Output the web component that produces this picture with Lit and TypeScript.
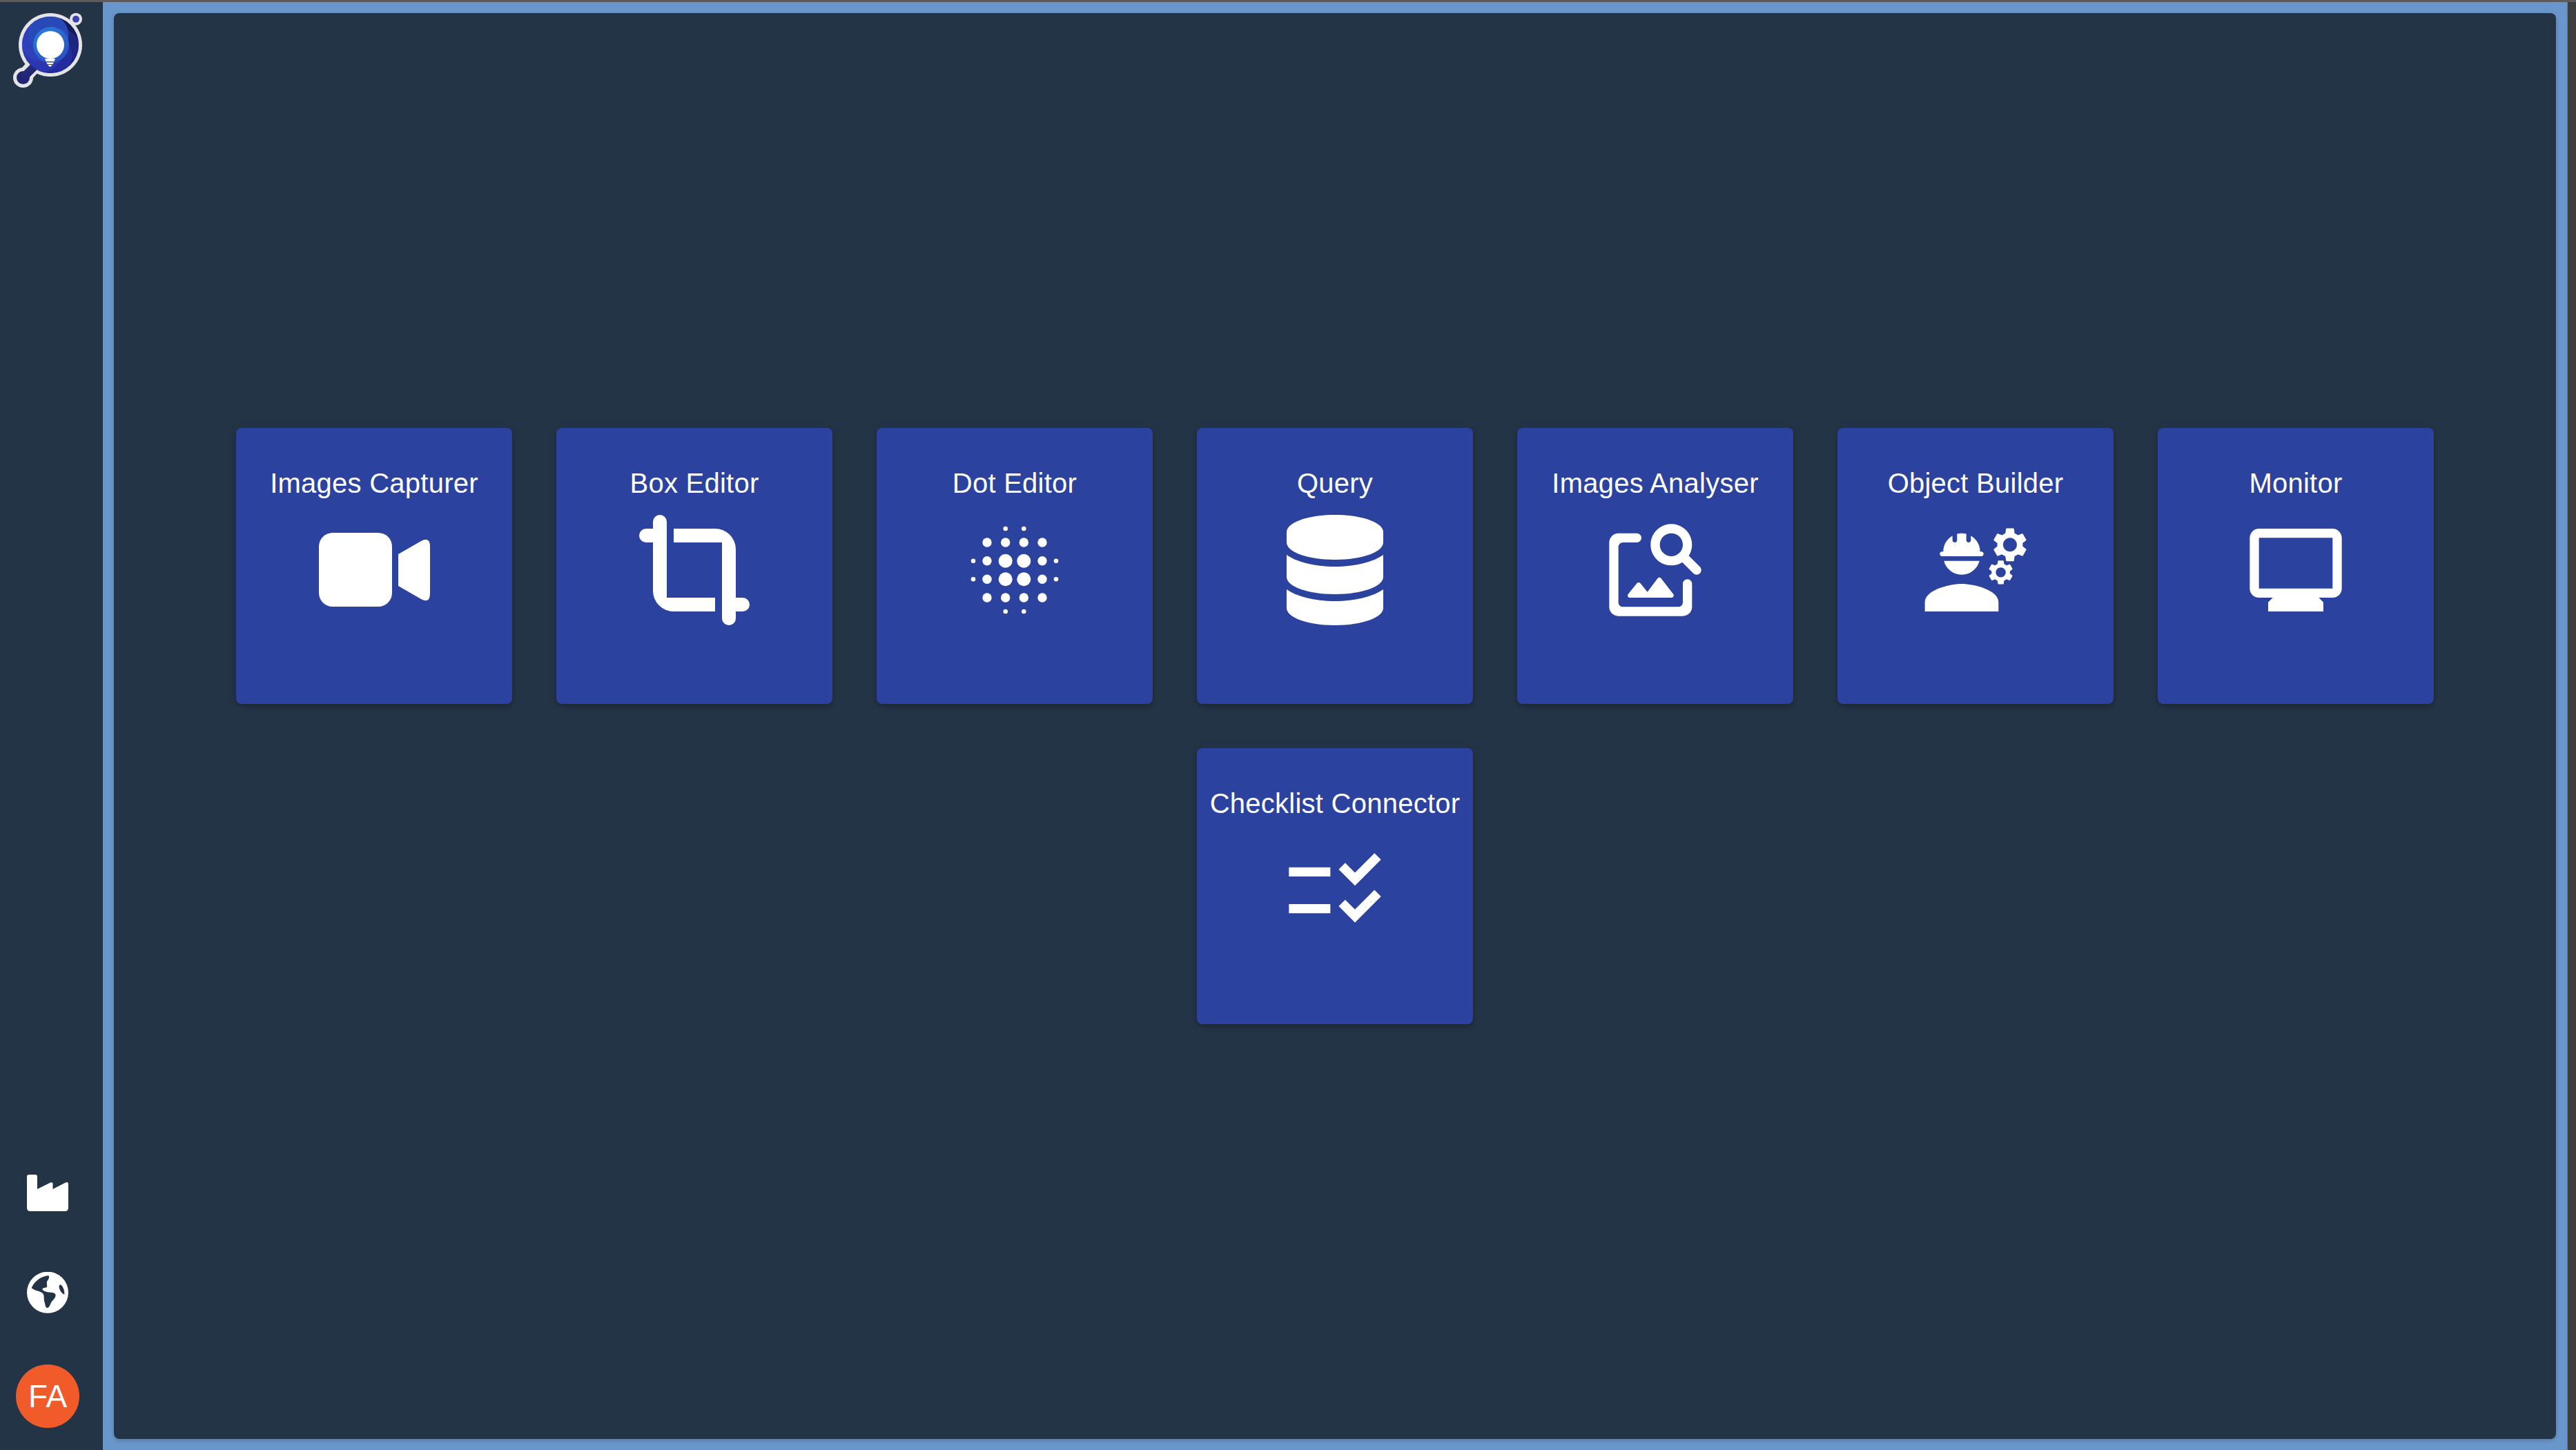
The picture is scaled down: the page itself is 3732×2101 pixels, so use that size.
import { LitElement, css, html, svg } from 'lit';
import { customElement } from 'lit/decorators.js';

const GEAR =
  'M22.1 6.84c.01-.11.02-.22.02-.34 0-.12-.01-.23-.03-.34l.74-.58c.07-.05.08-.15.04-.22l-.7-1.21c-.04-.08-.14-.1-.21-.08l-.86.35c-.23-.17-.47-.32-.74-.42l-.13-.93c-.02-.08-.09-.14-.17-.14h-1.4c-.08 0-.16.06-.17.14L18.36 4c-.26.11-.51.25-.74.42l-.87-.35c-.08-.03-.17 0-.21.08l-.7 1.21c-.04.08-.03.17.04.22l.74.58c-.02.11-.03.23-.03.34 0 .11.01.23.03.34l-.74.58c-.07.05-.08.15-.04.22l.7 1.21c.04.08.14.1.21.08l.87-.35c.23.17.47.32.74.42l.13.93c.01.08.08.14.17.14h1.4c.08 0 .16-.06.17-.14l.13-.93c.26-.11.51-.25.74-.42l.87.35c.08.03.17 0 .21-.08l.7-1.21c.04-.08.03-.17-.04-.22l-.73-.58zM19.36 8c-.83 0-1.5-.67-1.5-1.5s.67-1.5 1.5-1.5 1.5.67 1.5 1.5-.67 1.5-1.5 1.5z';

const BLUR_AXIS = [20, 40, 66.7, 93.3, 120, 140];
const BLUR_RADIUS = [
  [0, 0, 3.3, 3.3, 0, 0],
  [0, 6.7, 6.7, 6.7, 6.7, 0],
  [3.3, 6.7, 10, 10, 6.7, 3.3],
  [3.3, 6.7, 10, 10, 6.7, 3.3],
  [0, 6.7, 6.7, 6.7, 6.7, 0],
  [0, 0, 3.3, 3.3, 0, 0],
];

const APPS = [
  {
    name: 'Images Capturer',
    icon: svg`<svg class="icon" viewBox="0 0 160 160">
      <rect x="0" y="26" width="106" height="107" rx="20" />
      <path d="M115 57L148 38Q161 31 161 46V114Q161 129 148 122L115 103Z" />
    </svg>`,
  },
  {
    name: 'Box Editor',
    icon: svg`<svg class="icon" viewBox="0 0 16 16">
      <path d="M4 1A1 1 0 0 0 2 1V2H1A1 1 0 0 0 1 4H2V11A3 3 0 0 0 5 14H11V12H4Z" />
      <path d="M5 2H11A3 3 0 0 1 14 5V12H15A1 1 0 0 1 15 14H14V15A1 1 0 0 1 12 15V4H5Z" />
    </svg>`,
  },
  {
    name: 'Dot Editor',
    icon: svg`<svg class="icon" viewBox="0 0 160 160">
      ${BLUR_RADIUS.map((row, y) =>
        row.map((r, x) => (r ? svg`<circle cx=${BLUR_AXIS[x]} cy=${BLUR_AXIS[y]} r=${r} />` : null)),
      )}
    </svg>`,
  },
  {
    name: 'Query',
    icon: svg`<svg class="icon" viewBox="0 0 160 160">
      <path d="M10 25C10 11 41 0 80 0S150 11 150 25V40C150 54 119 65 80 65S10 54 10 40Z" />
      <path d="M10 58C24 68 50 75 80 75S136 68 150 58V90C150 104 119 115 80 115S10 104 10 90Z" />
      <path d="M10 108C24 118 50 125 80 125S136 118 150 108V135C150 149 119 160 80 160S10 149 10 135Z" />
    </svg>`,
  },
  {
    name: 'Images Analyser',
    icon: svg`<svg class="icon" viewBox="0 0 24 24">
      <path d="M18 15v4c0 .55-.45 1-1 1H5c-.55 0-1-.45-1-1V7c0-.55.45-1 1-1h3c.55 0 1-.45 1-1s-.45-1-1-1H4c-1.1 0-2 .9-2 2v14c0 1.1.9 2 2 2h14c1.1 0 2-.9 2-2v-5c0-.55-.45-1-1-1s-1 .45-1 1z" />
      <path d="M6.5 18H15.5c.4 0 .65-.4.45-.75L13.3 13.85c-.2-.3-.6-.3-.8 0L10.3 16.75 8.8 14.9c-.2-.25-.6-.25-.8 0L6.1 17.25C5.9 17.6 6.1 18 6.5 18z" />
      <path fill-rule="evenodd" d="M19.3 8.9c.44-.69.7-1.51.7-2.4C20 4.01 17.99 2 15.5 2S11 4.01 11 6.5s2.01 4.5 4.49 4.5c.88 0 1.7-.26 2.39-.7l2.41 2.41c.39.39 1.03.39 1.42 0 .39-.39.39-1.03 0-1.42L19.3 8.9zM15.5 9a2.5 2.5 0 0 1 0-5 2.5 2.5 0 0 1 0 5z" />
    </svg>`,
  },
  {
    name: 'Object Builder',
    icon: svg`<svg class="icon" viewBox="0 0 24 24">
      <path d="M9 15c-2.67 0-8 1.34-8 4v2h16v-2c0-2.66-5.33-4-8-4z" />
      <path d="M4.74 9h8.53c.27 0 .49-.22.49-.49v-.02c0-.27-.22-.49-.49-.49H13c0-1.48-.81-2.75-2-3.45V5.5c0 .28-.22.5-.5.5S10 5.78 10 5.5V4.14C9.68 4.06 9.35 4 9 4s-.68.06-1 .14V5.5c0 .28-.22.5-.5.5S7 5.78 7 5.5v-.95C5.81 5.25 5 6.52 5 8h-.26c-.27 0-.49.22-.49.49v.03c0 .26.22.48.49.48z" />
      <path d="M9 13c1.86 0 3.41-1.28 3.86-3H5.14c.45 1.72 2 3 3.86 3z" />
      <path fill-rule="evenodd" d=${GEAR} transform="translate(.14 0)" />
      <path fill-rule="evenodd" d=${GEAR} transform="translate(3.56 7.82) scale(.72)" />
    </svg>`,
  },
  {
    name: 'Monitor',
    icon: svg`<svg class="icon" viewBox="0 0 24 24">
      <path fill-rule="evenodd" d="M20 3H4c-1.1 0-2 .9-2 2v11c0 1.1.9 2 2 2h16c1.1 0 2-.9 2-2V5c0-1.1-.9-2-2-2zm0 13H4V5h16v11z" />
      <path d="M17 18H7l-1 1v2h12v-2z" />
    </svg>`,
  },
  {
    name: 'Checklist Connector',
    icon: svg`<svg class="icon" viewBox="0 0 24 24">
      <path d="M2 7h9v2H2zM2 15h9v2H2z" />
      <path d="M16.36 11L12.82 7.46l1.41-1.41 2.12 2.12 4.24-4.24L22 5.34z" />
      <path d="M16.36 19L12.82 15.46l1.41-1.41 2.12 2.12 4.24-4.24L22 13.34z" />
    </svg>`,
  },
];

// swirl blades of the logo, darkest first
const BLADES = [
  { angle: -40, fill: '#141a55' },
  { angle: 20, fill: '#1d2580' },
  { angle: 80, fill: '#232c9c' },
  { angle: 140, fill: '#2a37b0' },
  { angle: 200, fill: '#2f40bd' },
  { angle: 260, fill: '#2849b8' },
];

@customElement('app-root')
export class AppRoot extends LitElement {
  static styles = css`
    :host {
      display: block;
      width: 3732px;
      height: 2101px;
      overflow: hidden;
      background: #3e3e3e;
      font-family: 'Liberation Sans', Arial, sans-serif;
    }

    .strip {
      height: 3px;
      background: #5c5c5c;
    }

    .shell {
      display: flex;
      width: 3719px;
      height: 2098px;
      border-right: 1px solid #777;
      background: #243447;
    }

    .sidebar {
      box-sizing: border-box;
      flex: none;
      width: 149px;
      padding: 0 11px 32px 0;
      display: flex;
      flex-direction: column;
      justify-content: space-between;
      align-items: center;
    }

    .logo {
      display: block;
      width: 138px;
      height: 128px;
    }

    .tools {
      display: flex;
      flex-direction: column;
      align-items: center;
    }

    .factory {
      display: block;
      width: 60px;
      height: 53px;
      margin-bottom: 88px;
      fill: #fff;
    }

    .globe {
      display: block;
      width: 60px;
      height: 60px;
      margin-bottom: 74px;
    }

    .avatar {
      width: 92px;
      height: 92px;
      border-radius: 50%;
      background: #f15a29;
      color: #fff;
      font-size: 46px;
      display: flex;
      align-items: center;
      justify-content: center;
    }

    .frame {
      flex: 1;
      padding: 16px;
      background: #6a97cb;
      display: flex;
    }

    .panel {
      flex: 1;
      border-radius: 8px;
      background: #243447;
      box-shadow: 0 2px 6px rgba(0, 0, 0, 0.2);
      display: flex;
      flex-wrap: wrap;
      align-content: center;
      justify-content: center;
      gap: 64px;
    }

    .card {
      box-sizing: border-box;
      width: 400px;
      height: 400px;
      padding-top: 57px;
      border-radius: 8px;
      background: #2b439e;
      box-shadow: 0 3px 8px rgba(0, 0, 0, 0.3);
      color: #fff;
      display: flex;
      flex-direction: column;
      align-items: center;
    }

    .card__name {
      font-size: 40px;
      line-height: 46px;
      letter-spacing: 0.25px;
      white-space: nowrap;
    }

    .icon {
      display: block;
      width: 160px;
      height: 160px;
      margin-top: 23px;
      fill: #fff;
      overflow: visible;
    }
  `;

  renderLogo() {
    const cx = 73;
    const cy = 65;
    return svg`<svg class="logo" viewBox="0 3 138 128">
      <defs>
        <clipPath id="disc"><circle cx=${cx} cy=${cy} r="41" /></clipPath>
        <linearGradient id="core" x1="0.2" y1="0" x2="0.8" y2="1">
          <stop offset="0" stop-color="#2c7ad8" />
          <stop offset="1" stop-color="#2a4fc0" />
        </linearGradient>
        <linearGradient id="tail" x1="0" y1="0" x2="1" y2="1">
          <stop offset="0" stop-color="#2a2f92" />
          <stop offset="1" stop-color="#1b1f5e" />
        </linearGradient>
      </defs>
      <circle cx="110" cy="27.7" r="9" fill="#e4e4e6" />
      <circle cx="110" cy="27.7" r="5" fill="#3a41b5" />
      <path d="M33.5 112.5L52 92" stroke="#e4e4e6" stroke-width="22" />
      <circle cx=${cx} cy=${cy} r="46" fill="#e4e4e6" />
      <circle cx="33.5" cy="112.5" r="14.5" fill="#e4e4e6" />
      <circle cx="33.5" cy="112.5" r="9.5" fill="#1f2370" />
      <path d="M33.5 112.5L56 90" stroke="url(#tail)" stroke-width="12" />
      <circle cx=${cx} cy=${cy} r="41" fill="#1f2a8c" />
      <g clip-path="url(#disc)">
        ${BLADES.map(({ angle, fill }) => {
          const a = (angle * Math.PI) / 180;
          return svg`<circle cx=${cx + 15 * Math.cos(a)} cy=${cy + 15 * Math.sin(a)} r="29" fill=${fill} />`;
        })}
        <circle cx=${cx + 1} cy=${cy} r="26" fill="url(#core)" />
      </g>
      <circle cx=${cx} cy=${cy} r="20" fill="#fff" />
      <path d="M65 85H80L78.5 89H66.5Z" fill="#fff" />
      <path d="M67 90.5H78L76.5 93H68.5Z" fill="#fff" />
      <path d="M69 94H76L72.5 97Z" fill="#fff" />
    </svg>`;
  }

  render() {
    return html`
      <div class="strip"></div>
      <div class="shell">
        <nav class="sidebar">
          ${this.renderLogo()}
          <div class="tools">
            <svg class="factory" viewBox="0 0 60 53">
              <path d="M3 0H12Q15 0 15 3V21L34 11.5Q37.5 10.5 37.5 13V21L56 11.5Q60 10 60 14V48Q60 53 55 53H5Q0 53 0 48V3Q0 0 3 0Z" />
            </svg>
            <svg class="globe" viewBox="117 490 180 180">
              <circle cx="207" cy="579" r="90" fill="#fff" />
              <path fill="#243447" d="M212 506C190 506 150 525 137 560C150 572 170 572 185 582C195 590 188 610 195 625C197 640 200 648 208 646C218 640 218 625 228 615C238 605 245 595 240 585C225 575 205 582 190 572C180 565 185 558 200 558C210 555 200 540 205 530C212 522 215 515 212 506Z" />
              <path fill="#243447" d="M262 545C272 550 280 565 280 588C268 585 255 565 257 550Z" />
            </svg>
            <div class="avatar">FA</div>
          </div>
        </nav>
        <main class="frame">
          <section class="panel">
            ${APPS.map(
              (app) => html`
                <article class="card">
                  <div class="card__name">${app.name}</div>
                  ${app.icon}
                </article>
              `,
            )}
          </section>
        </main>
      </div>
    `;
  }
}
